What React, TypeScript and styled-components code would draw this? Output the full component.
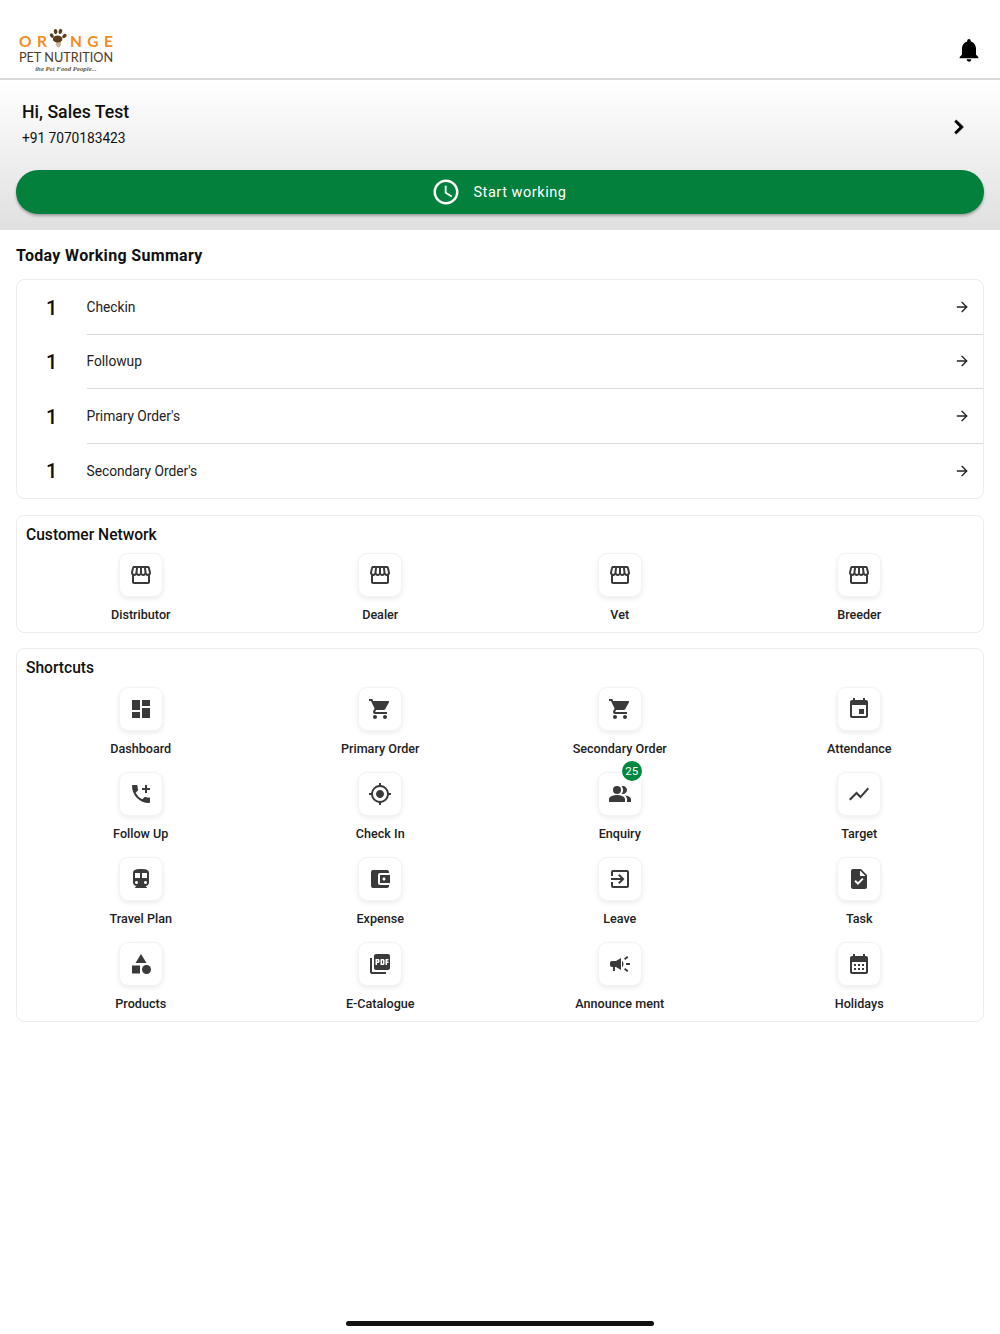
import React from 'react';
import styled, { createGlobalStyle } from 'styled-components';
import { ArrowRight } from 'lucide-react';
import { FaChevronRight } from 'react-icons/fa';
import {
  MdAccessTime,
  MdAccountBalanceWallet,
  MdAddIcCall,
  MdCalendarMonth,
  MdCampaign,
  MdCategory,
  MdDashboard,
  MdDirectionsSubway,
  MdEvent,
  MdExitToApp,
  MdGpsFixed,
  MdNotifications,
  MdOutlineStorefront,
  MdPeopleAlt,
  MdPictureAsPdf,
  MdShoppingCart,
  MdShowChart,
  MdTask,
} from 'react-icons/md';

const GlobalStyle = createGlobalStyle`
  html, body {
    margin: 0;
    padding: 0;
    background: #fff;
    font-family: Roboto, "Liberation Sans", sans-serif;
    color: #111;
  }
  * { box-sizing: border-box; }
`;

const Page = styled.div`
  width: 1000px;
  height: 1334px;
  display: flex;
  flex-direction: column;
  background: #fff;
`;

const Header = styled.header`
  height: 80px;
  flex: none;
  display: flex;
  align-items: center;
  justify-content: space-between;
  padding: 0 17px 0 19px;
  border-bottom: 2px solid #d9d9d9;
`;

const Logo = styled.div`
  width: 94px;
  margin-top: 27px;
  display: flex;
  flex-direction: column;
  align-items: center;
`;

const LogoTop = styled.div`
  width: 94px;
  height: 16px;
  display: flex;
  align-items: center;
  justify-content: space-between;
  font-family: Lato, sans-serif;
  font-size: 15.5px;
  font-weight: 700;
  line-height: 16px;
  color: #f28c22;
`;

const PawWrap = styled.span`
  width: 18px;
  height: 20px;
  margin: -6px -3px 0;
  display: block;
`;

const LogoName = styled.div`
  font-family: Lato, sans-serif;
  font-size: 12.7px;
  font-weight: 400;
  line-height: 16px;
  color: #4f3a1e;
  white-space: nowrap;
`;

const LogoTag = styled.div`
  font-family: "Liberation Serif", serif;
  font-style: italic;
  font-weight: 700;
  font-size: 6.8px;
  line-height: 8px;
  color: #6b5636;
  white-space: nowrap;
`;

const BellButton = styled.span`
  display: flex;
  font-size: 28px;
  color: #000;
  margin-top: 22px;
`;

const Hero = styled.section`
  height: 150px;
  flex: none;
  padding: 21px 16px 0;
  background: linear-gradient(#ffffff, #e0e0e0);
`;

const UserRow = styled.div`
  height: 69px;
  padding: 0 17px 0 6px;
  display: flex;
  align-items: flex-start;
  justify-content: space-between;
`;

const UserName = styled.div`
  font-size: 17.7px;
  line-height: 22px;
  font-weight: 500;
  color: #111;
`;

const UserPhone = styled.div`
  margin-top: 5px;
  font-size: 13.8px;
  line-height: 20px;
  letter-spacing: -0.06px;
  color: #111;
`;

const UserChevron = styled.span`
  display: flex;
  font-size: 16px;
  color: #000;
  margin-top: 18px;
`;

const StartButton = styled.button`
  width: 100%;
  height: 44px;
  border: 0;
  border-radius: 22px;
  background: #03803c;
  box-shadow: 0 2px 3px rgba(0, 0, 0, 0.3);
  color: #fff;
  display: flex;
  align-items: center;
  justify-content: center;
  gap: 12px;
  font-family: inherit;
  font-size: 14.5px;
  letter-spacing: 0.55px;
  padding: 0 2px 0 0;
`;

const Content = styled.main`
  padding: 0 16px;
  display: flex;
  flex-direction: column;
`;

const SummaryTitle = styled.h2`
  margin: 16px 0 13px;
  font-size: 16px;
  line-height: 20px;
  font-weight: 700;
  letter-spacing: 0.33px;
  color: #111;
`;

const Card = styled.section`
  border: 1px solid #ececec;
  border-radius: 8px;
  background: #fff;
`;

const SummaryRow = styled.div<{ $last?: boolean }>`
  height: ${(p) => (p.$last ? '54px' : '54.6px')};
  display: flex;
  align-items: center;
  padding-left: 29px;
`;

const RowCount = styled.span`
  width: 40.5px;
  flex: none;
  font-size: 20px;
  font-weight: 500;
  color: #111;
  margin-top: 1px;
`;

const RowBody = styled.div<{ $last?: boolean }>`
  flex: 1;
  height: 100%;
  display: flex;
  align-items: center;
  justify-content: space-between;
  padding-right: 13px;
  font-size: 13.8px;
  letter-spacing: -0.03px;
  color: #222;
  border-bottom: ${(p) => (p.$last ? '0' : '1px solid #d9d9d9')};
`;

const ShortcutCard = styled(Card)`
  margin-top: 16px;
  padding: 9px 4px 1px;

  & + & {
    margin-top: 15px;
  }
`;

const CardTitle = styled.h3`
  margin: 0 0 8.5px 5px;
  font-size: 15.6px;
  line-height: 20px;
  font-weight: 500;
  color: #111;
`;

const TileGrid = styled.div`
  display: grid;
  grid-template-columns: repeat(4, 1fr);
  grid-auto-rows: 78px;
  row-gap: 7px;
`;

const Tile = styled.div`
  display: flex;
  flex-direction: column;
  align-items: center;
`;

const TileBox = styled.div`
  position: relative;
  width: 44px;
  height: 44px;
  display: flex;
  align-items: center;
  justify-content: center;
  background: #fff;
  border: 1px solid #f3f3f3;
  border-radius: 9px;
  box-shadow: 0 2px 5px rgba(0, 0, 0, 0.08);
  color: #3a3a3a;
  font-size: 24px;
`;

const TileLabel = styled.div`
  margin-top: 9.8px;
  font-size: 12.6px;
  line-height: 16px;
  font-weight: 500;
  color: #222;
  white-space: nowrap;
`;

const Badge = styled.span`
  position: absolute;
  top: -12px;
  right: -1px;
  width: 20px;
  height: 20px;
  border-radius: 50%;
  background: #03883f;
  color: #fff;
  font-size: 11.5px;
  line-height: 20px;
  text-align: center;
`;

const HomeBar = styled.div`
  margin: auto auto 8px;
  width: 308px;
  height: 5px;
  border-radius: 3px;
  background: #111;
`;

function Paw() {
  return (
    <PawWrap>
      <svg width="18" height="20" viewBox="0 0 18 20">
        <ellipse cx="9.5" cy="15" rx="2.6" ry="4.4" fill="#c9b79c" />
        <ellipse cx="8.6" cy="11" rx="4.8" ry="3.6" fill="#5a3d1c" />
        <ellipse cx="2.8" cy="7.6" rx="1.7" ry="2.4" fill="#5a3d1c" transform="rotate(-35 2.8 7.6)" />
        <ellipse cx="6.6" cy="3.6" rx="1.8" ry="2.7" fill="#5a3d1c" transform="rotate(-8 6.6 3.6)" />
        <ellipse cx="11.4" cy="3.4" rx="1.8" ry="2.6" fill="#5a3d1c" transform="rotate(15 11.4 3.4)" />
        <ellipse cx="15.4" cy="8" rx="1.7" ry="2.4" fill="#5a3d1c" transform="rotate(50 15.4 8)" />
      </svg>
    </PawWrap>
  );
}

const summary = ['Checkin', 'Followup', "Primary Order's", "Secondary Order's"];

const network = ['Distributor', 'Dealer', 'Vet', 'Breeder'];

const shortcuts: { label: string; icon: React.ReactNode; badge?: number }[] = [
  { label: 'Dashboard', icon: <MdDashboard /> },
  { label: 'Primary Order', icon: <MdShoppingCart /> },
  { label: 'Secondary Order', icon: <MdShoppingCart /> },
  { label: 'Attendance', icon: <MdEvent /> },
  { label: 'Follow Up', icon: <MdAddIcCall /> },
  { label: 'Check In', icon: <MdGpsFixed /> },
  { label: 'Enquiry', icon: <MdPeopleAlt />, badge: 25 },
  { label: 'Target', icon: <MdShowChart /> },
  { label: 'Travel Plan', icon: <MdDirectionsSubway /> },
  { label: 'Expense', icon: <MdAccountBalanceWallet /> },
  { label: 'Leave', icon: <MdExitToApp /> },
  { label: 'Task', icon: <MdTask /> },
  { label: 'Products', icon: <MdCategory /> },
  { label: 'E-Catalogue', icon: <MdPictureAsPdf /> },
  { label: 'Announce ment', icon: <MdCampaign /> },
  { label: 'Holidays', icon: <MdCalendarMonth /> },
];

export default function App() {
  return (
    <Page>
      <GlobalStyle />
      <Header>
        <Logo>
          <LogoTop>
            <span>O</span>
            <span>R</span>
            <Paw />
            <span>N</span>
            <span>G</span>
            <span>E</span>
          </LogoTop>
          <LogoName>PET NUTRITION</LogoName>
          <LogoTag>the Pet Food People...</LogoTag>
        </Logo>
        <BellButton>
          <MdNotifications />
        </BellButton>
      </Header>

      <Hero>
        <UserRow>
          <div>
            <UserName>Hi, Sales Test</UserName>
            <UserPhone>+91 7070183423</UserPhone>
          </div>
          <UserChevron>
            <FaChevronRight stroke="currentColor" strokeWidth={24} />
          </UserChevron>
        </UserRow>
        <StartButton>
          <MdAccessTime size={30} />
          <span>Start working</span>
        </StartButton>
      </Hero>

      <Content>
        <SummaryTitle>Today Working Summary</SummaryTitle>
        <Card>
          {summary.map((name, i) => (
            <SummaryRow key={name} $last={i === summary.length - 1}>
              <RowCount>1</RowCount>
              <RowBody $last={i === summary.length - 1}>
                <span>{name}</span>
                <ArrowRight size={16} color="#222" />
              </RowBody>
            </SummaryRow>
          ))}
        </Card>

        <ShortcutCard>
          <CardTitle>Customer Network</CardTitle>
          <TileGrid>
            {network.map((name) => (
              <Tile key={name}>
                <TileBox>
                  <MdOutlineStorefront />
                </TileBox>
                <TileLabel>{name}</TileLabel>
              </Tile>
            ))}
          </TileGrid>
        </ShortcutCard>

        <ShortcutCard>
          <CardTitle>Shortcuts</CardTitle>
          <TileGrid>
            {shortcuts.map((s) => (
              <Tile key={s.label}>
                <TileBox>
                  {s.icon}
                  {s.badge ? <Badge>{s.badge}</Badge> : null}
                </TileBox>
                <TileLabel>{s.label}</TileLabel>
              </Tile>
            ))}
          </TileGrid>
        </ShortcutCard>
      </Content>

      <HomeBar />
    </Page>
  );
}
